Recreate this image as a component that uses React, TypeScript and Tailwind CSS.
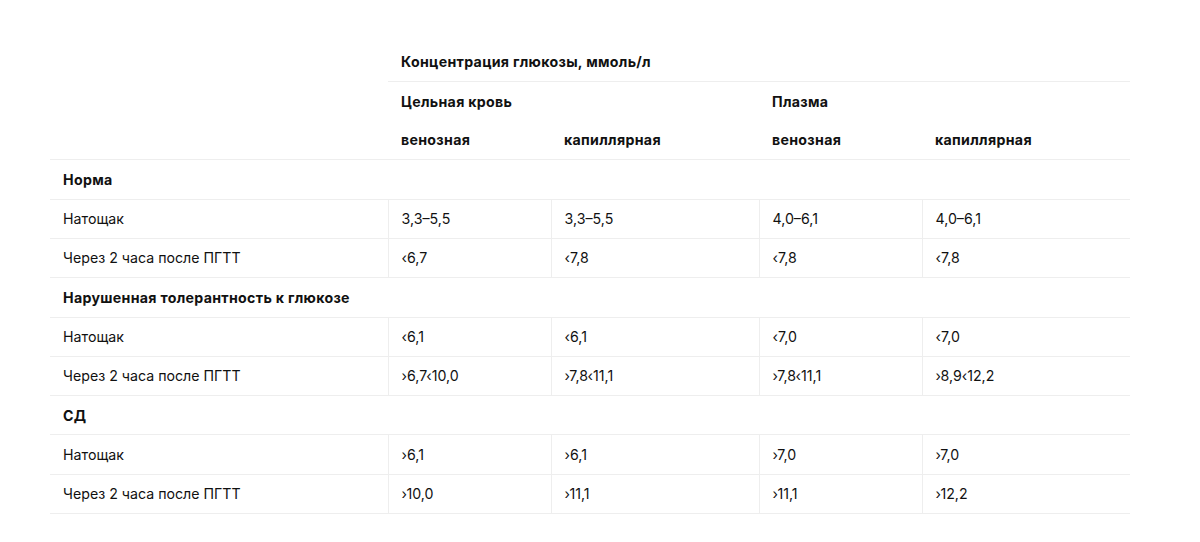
import React from "react";

type Row = { label: string; values: [string, string, string, string] };
type Section = { title: string; rows: Row[] };

const sections: Section[] = [
  {
    title: "Норма",
    rows: [
      { label: "Натощак", values: ["3,3–5,5", "3,3–5,5", "4,0–6,1", "4,0–6,1"] },
      { label: "Через 2 часа после ПГТТ", values: ["‹6,7", "‹7,8", "‹7,8", "‹7,8"] },
    ],
  },
  {
    title: "Нарушенная толерантность к глюкозе",
    rows: [
      { label: "Натощак", values: ["‹6,1", "‹6,1", "‹7,0", "‹7,0"] },
      { label: "Через 2 часа после ПГТТ", values: ["›6,7‹10,0", "›7,8‹11,1", "›7,8‹11,1", "›8,9‹12,2"] },
    ],
  },
  {
    title: "СД",
    rows: [
      { label: "Натощак", values: ["›6,1", "›6,1", "›7,0", "›7,0"] },
      { label: "Через 2 часа после ПГТТ", values: ["›10,0", "›11,1", "›11,1", "›12,2"] },
    ],
  },
];

const cell = "h-[39.3px] px-[13px] py-0 align-middle text-left";
const head = `${cell} font-bold tracking-[0.3px]`;

export default function App() {
  return (
    <div
      className="min-h-screen bg-white pt-[42px] px-[50px] text-[14.2px] text-[#111111]"
      style={{ fontFamily: "Inter, 'Noto Sans', sans-serif" }}
    >
      <table className="w-[1080px] table-fixed border-collapse">
        <colgroup>
          <col className="w-[338px]" />
          <col className="w-[163px]" />
          <col className="w-[208px]" />
          <col className="w-[163px]" />
          <col className="w-[208px]" />
        </colgroup>
        <thead>
          <tr>
            <th rowSpan={3} className={`${cell} border-b border-[#eeeeee]`}></th>
            <th colSpan={4} className={`${head} border-b border-[#eeeeee]`}>
              Концентрация глюкозы, ммоль/л
            </th>
          </tr>
          <tr>
            <th colSpan={2} className={head}>Цельная кровь</th>
            <th colSpan={2} className={head}>Плазма</th>
          </tr>
          <tr>
            <th className={`${head} border-b border-[#eeeeee]`}>венозная</th>
            <th className={`${head} border-b border-[#eeeeee]`}>капиллярная</th>
            <th className={`${head} border-b border-[#eeeeee]`}>венозная</th>
            <th className={`${head} border-b border-[#eeeeee]`}>капиллярная</th>
          </tr>
        </thead>
        <tbody>
          {sections.map((section) => (
            <React.Fragment key={section.title}>
              <tr>
                <td colSpan={5} className={`${head} border-b border-[#eeeeee]`}>
                  {section.title}
                </td>
              </tr>
              {section.rows.map((row) => (
                <tr key={section.title + row.label}>
                  <td className={`${cell} border-b border-[#eeeeee]`}>{row.label}</td>
                  {row.values.map((v, i) => (
                    <td key={i} className={`${cell} border-b border-l border-[#eeeeee]`}>
                      {v}
                    </td>
                  ))}
                </tr>
              ))}
            </React.Fragment>
          ))}
        </tbody>
      </table>
    </div>
  );
}
